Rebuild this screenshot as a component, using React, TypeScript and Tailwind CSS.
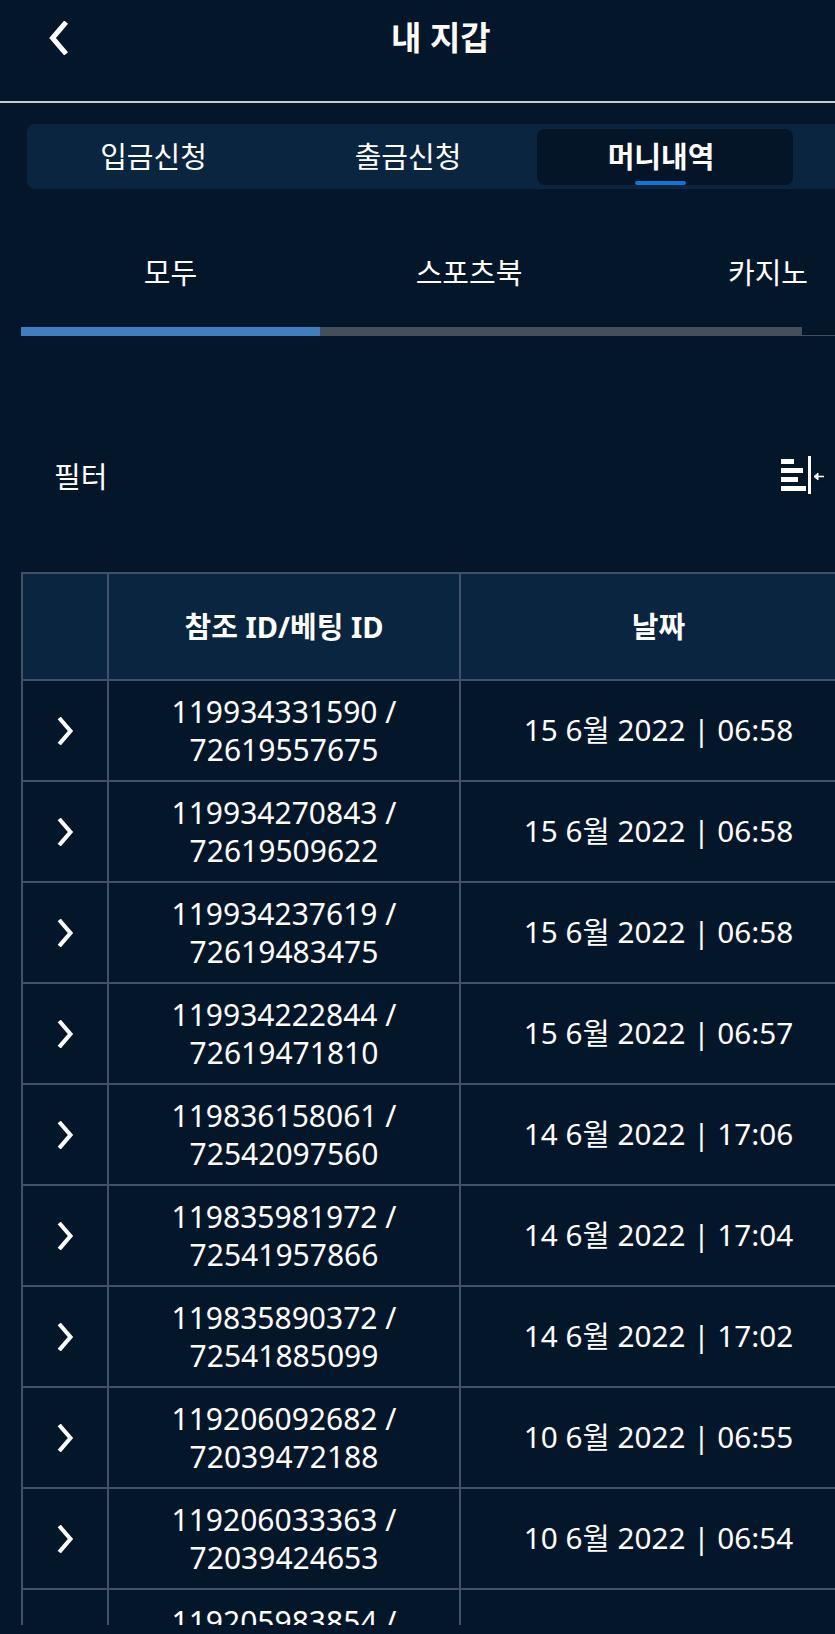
const rows = [
  ["119934331590", "72619557675", "15 6월 2022 | 06:58"],
  ["119934270843", "72619509622", "15 6월 2022 | 06:58"],
  ["119934237619", "72619483475", "15 6월 2022 | 06:58"],
  ["119934222844", "72619471810", "15 6월 2022 | 06:57"],
  ["119836158061", "72542097560", "14 6월 2022 | 17:06"],
  ["119835981972", "72541957866", "14 6월 2022 | 17:04"],
  ["119835890372", "72541885099", "14 6월 2022 | 17:02"],
  ["119206092682", "72039472188", "10 6월 2022 | 06:55"],
  ["119206033363", "72039424653", "10 6월 2022 | 06:54"],
]

function Chevron({ left, className }: { left?: boolean; className: string }) {
  return (
    <svg viewBox="0 0 20 34" className={className} fill="none" stroke="white" strokeWidth="5" strokeLinecap="square">
      <path d={left ? "M16 3 L4 17 L16 31" : "M4 3 L16 17 L4 31"} />
    </svg>
  )
}

function CollapseIcon() {
  return (
    <svg width="44" height="38" viewBox="0 0 44 38" fill="none">
      <rect x="0" y="3" width="13" height="5" fill="white" />
      <rect x="0" y="12" width="22" height="5" fill="white" />
      <rect x="0" y="21" width="17" height="5" fill="white" />
      <rect x="0" y="30" width="25" height="5" fill="white" />
      <rect x="27" y="0" width="3" height="38" fill="white" />
      <path d="M33 20.5 L43 20.5" stroke="white" strokeWidth="1.5" />
      <path d="M37 17 L33 20.5 L37 24 Z" fill="white" stroke="white" />
    </svg>
  )
}

export default function App() {
  return (
    <div className="w-[835px] h-[1634px] overflow-hidden bg-[#04172a] text-white font-['Noto_Sans','Noto_Sans_CJK_KR',sans-serif]">
      {/* Header */}
      <div className="h-[101px] flex pl-[48px] pt-[21px]">
        <Chevron left className="w-[21px] h-[34px]" />
        <h1 className="ml-[322px] h-[34px] leading-[34px] text-[33px] font-bold whitespace-nowrap">내 지갑</h1>
      </div>
      <div className="h-[2px] bg-[#c9ced3]" />

      {/* Wallet tabs */}
      <div className="mt-[21px] ml-[27px] h-[65px] w-[820px] flex items-center bg-[#0a2540] rounded-lg text-[29px]">
        <div className="w-[253px] text-center">입금신청</div>
        <div className="w-[254px] pl-[2px] text-center">출금신청</div>
        <div className="relative ml-[3px] w-[256px] h-[56px] flex items-center justify-center pr-[8px] rounded-lg bg-[#051528] font-bold">
          머니내역
          <span className="absolute left-[98px] bottom-0 w-[51px] h-[4px] rounded-sm bg-[#1173d4]" />
        </div>
      </div>

      {/* Category tabs */}
      <div className="mt-[54px] ml-[21px] h-[60px] flex items-center text-[29px] whitespace-nowrap">
        <div className="w-[299px] shrink-0 text-center">모두</div>
        <div className="w-[298px] shrink-0 text-center">스포츠북</div>
        <div className="w-[300px] shrink-0 text-center">카지노</div>
      </div>
      <div className="mt-[24px] ml-[21px] h-[9px] flex">
        <div className="w-[299px] bg-[#3d7fc0]" />
        <div className="w-[482px] bg-[#444f5a]" />
        <div className="flex-1 border-b border-[#444f5a]" />
      </div>

      {/* Filter */}
      <div className="mt-[120px] h-[38px] pl-[54px] pr-[10px] flex items-center justify-between">
        <span className="pt-[4px] text-[29px]">필터</span>
        <CollapseIcon />
      </div>

      {/* Table */}
      <div className="mt-[77px] ml-[20px] pt-[1px] pl-[1px] h-[1054px] overflow-hidden">
        <table className="table-fixed w-[835px] border-collapse text-[30px] text-center">
          <colgroup>
            <col className="w-[86px]" />
            <col className="w-[352px]" />
            <col className="w-[397px]" />
          </colgroup>
          <thead>
            <tr className="h-[107px] bg-[#0a2540] text-[29px] font-bold">
              <th className="border-2 border-[#3f5269]" />
              <th className="border-2 border-[#3f5269]">참조 ID/베팅 ID</th>
              <th className="border-2 border-[#3f5269]">날짜</th>
            </tr>
          </thead>
          <tbody>
            {rows.map((row) => (
              <tr key={row[0]} className="h-[101px]">
                <td className="border-2 border-[#3f5269]">
                  <Chevron className="w-[17px] h-[28px] mx-auto" />
                </td>
                <td className="border-2 border-[#3f5269] leading-[38px]">
                  {row[0]} /<br />
                  {row[1]}
                </td>
                <td className="border-2 border-[#3f5269] whitespace-nowrap text-[29.7px]">{row[2]}</td>
              </tr>
            ))}
            <tr className="h-[101px]">
              <td className="border-2 border-[#3f5269]" />
              <td className="border-2 border-[#3f5269] align-top pt-[13px] leading-[38px]">119205983854 /</td>
              <td className="border-2 border-[#3f5269]" />
            </tr>
          </tbody>
        </table>
      </div>
    </div>
  )
}
